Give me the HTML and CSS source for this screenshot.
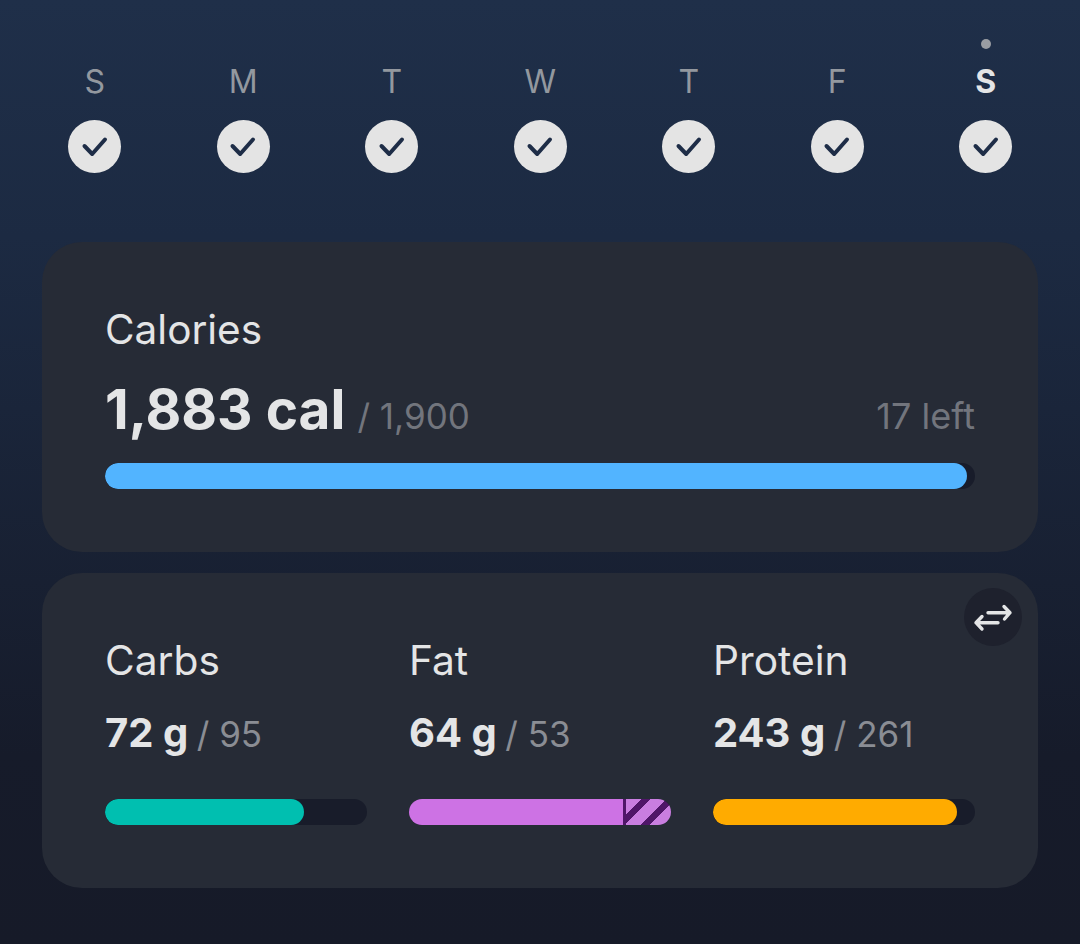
FILE: index.html
```html
<!DOCTYPE html>
<html lang="en">
<head>
  <meta charset="UTF-8" />
  <title>Daily Summary</title>
  <meta name="viewport" content="width=device-width, initial-scale=1.0" />
  <link rel="stylesheet" href="styles.css">
</head>
<body>
  <div class="week">
    <div class="day"><span class="dot"></span><span class="letter">S</span><span class="check"><svg viewBox="0 0 28 28"><path d="M3.5 13l7.7 8L24 6.5"/></svg></span></div>
    <div class="day"><span class="dot"></span><span class="letter">M</span><span class="check"><svg viewBox="0 0 28 28"><path d="M3.5 13l7.7 8L24 6.5"/></svg></span></div>
    <div class="day"><span class="dot"></span><span class="letter">T</span><span class="check"><svg viewBox="0 0 28 28"><path d="M3.5 13l7.7 8L24 6.5"/></svg></span></div>
    <div class="day"><span class="dot"></span><span class="letter">W</span><span class="check"><svg viewBox="0 0 28 28"><path d="M3.5 13l7.7 8L24 6.5"/></svg></span></div>
    <div class="day"><span class="dot"></span><span class="letter">T</span><span class="check"><svg viewBox="0 0 28 28"><path d="M3.5 13l7.7 8L24 6.5"/></svg></span></div>
    <div class="day"><span class="dot"></span><span class="letter">F</span><span class="check"><svg viewBox="0 0 28 28"><path d="M3.5 13l7.7 8L24 6.5"/></svg></span></div>
    <div class="day today"><span class="dot"></span><span class="letter">S</span><span class="check"><svg viewBox="0 0 28 28"><path d="M3.5 13l7.7 8L24 6.5"/></svg></span></div>
  </div>

  <section class="card calories">
    <h2>Calories</h2>
    <div class="totals">
      <span class="amount">1,883 cal</span>
      <span class="goal">/ 1,900</span>
      <span class="left">17 left</span>
    </div>
    <div class="bar"><div class="fill blue" style="width: 99.1%"></div></div>
  </section>

  <section class="card macros">
    <button class="swap" aria-label="Swap">
      <svg viewBox="0 0 40 32"><path d="M15 11.7h22M31 5.5l6 6.2-5.5 6.3M25 21.7H3M9 15.5l-6 6.2 6 6.3"/></svg>
    </button>
    <div class="macro">
      <h3>Carbs</h3>
      <div class="totals-small"><span class="amount-small">72 g</span> <span class="goal-small">/ 95</span></div>
      <div class="bar"><div class="fill teal" style="width: 75.8%"></div></div>
    </div>
    <div class="macro">
      <h3>Fat</h3>
      <div class="totals-small"><span class="amount-small">64 g</span> <span class="goal-small">/ 53</span></div>
      <div class="bar over"><div class="fill purple" style="width: 81.7%"></div><div class="excess"></div></div>
    </div>
    <div class="macro">
      <h3>Protein</h3>
      <div class="totals-small"><span class="amount-small">243 g</span> <span class="goal-small">/ 261</span></div>
      <div class="bar"><div class="fill orange" style="width: 93.1%"></div></div>
    </div>
  </section>
</body>
</html>
```

FILE: styles.css
```css
* {
  box-sizing: border-box;
}

html, body {
  height: 100%;
}

body {
  margin: 0;
  height: 944px;
  overflow: hidden;
  font-family: Inter, "Liberation Sans", sans-serif;
  background: linear-gradient(180deg, #1f2f49 0%, #1c2a42 25%, #161b2a 80%, #161a28 100%);
  color: #e4e5e6;
}

.week {
  display: grid;
  grid-template-columns: repeat(7, 1fr);
  padding: 0 20px 0 20.5px;
  height: 242px;
}

.day {
  display: flex;
  flex-direction: column;
  align-items: center;
  padding-top: 39px;
}

.dot {
  width: 10px;
  height: 10px;
  border-radius: 50%;
  margin-bottom: 11px;
}

.today .dot {
  background: #9a9da3;
}

.letter {
  font-size: 32px;
  line-height: 44px;
  color: #93989f;
}

.today .letter {
  font-weight: 700;
  color: #e4e5e6;
}

.check {
  width: 53px;
  height: 53px;
  margin-top: 16px;
  border-radius: 50%;
  background: #e4e4e4;
  display: flex;
  align-items: center;
  justify-content: center;
}

.check svg {
  width: 28px;
  height: 28px;
}

.check path {
  fill: none;
  stroke: #1e2d47;
  stroke-width: 4;
  stroke-linecap: round;
  stroke-linejoin: round;
}

.card {
  margin: 0 42px;
  background: #262b36;
  border-radius: 40px;
}

.calories {
  height: 310px;
  padding: 64px 63px 0;
}

h2, h3 {
  margin: 0;
  font-weight: 400;
  line-height: 48px;
}

h2 {
  font-size: 40.5px;
}

h3 {
  font-size: 40.7px;
}

.totals {
  display: flex;
  align-items: baseline;
  margin-top: 25px;
}

.amount {
  font-size: 55px;
  line-height: 60px;
  font-weight: 700;
}

.goal {
  font-size: 35px;
  margin-left: 12px;
  color: #72757d;
}

.left {
  font-size: 36px;
  margin-left: auto;
  color: #72757d;
}

.bar {
  display: flex;
  height: 26px;
  border-radius: 13px;
  background: #181c2a;
  overflow: hidden;
}

.calories .bar {
  margin-top: 24px;
}

.fill {
  height: 100%;
  border-radius: 13px;
}

.blue {
  background: #52b4ff;
}

.teal {
  background: #00bfb0;
}

.orange {
  background: #ffab00;
}

.purple {
  background: #cd72e4;
  border-radius: 0;
}

.excess {
  flex: 1;
  border-left: 3px solid #4f1668;
  background: repeating-linear-gradient(135deg, #c97ee0 0 10.7px, #4f1668 10.7px 17.2px, #c97ee0 17.2px 17.7px);
}

.macros {
  position: relative;
  height: 315px;
  margin-top: 21px;
  padding: 64px 63px 0;
  display: grid;
  grid-template-columns: repeat(3, 262px);
  column-gap: 42px;
}

.swap {
  position: absolute;
  top: 15px;
  right: 16px;
  width: 58px;
  height: 58px;
  padding: 0;
  border: none;
  border-radius: 50%;
  background: #1e212d;
  display: flex;
  align-items: center;
  justify-content: center;
}

.swap svg {
  width: 40px;
  height: 32px;
}

.swap path {
  fill: none;
  stroke: #e4e5e6;
  stroke-width: 3.4;
  stroke-linecap: round;
  stroke-linejoin: round;
}

.totals-small {
  margin-top: 22px;
  line-height: 52px;
}

.amount-small {
  font-size: 40px;
  font-weight: 700;
}

.goal-small {
  font-size: 35px;
  color: #8a8d94;
  margin-left: 4px;
}

.macro .bar {
  margin-top: 32px;
}
```
